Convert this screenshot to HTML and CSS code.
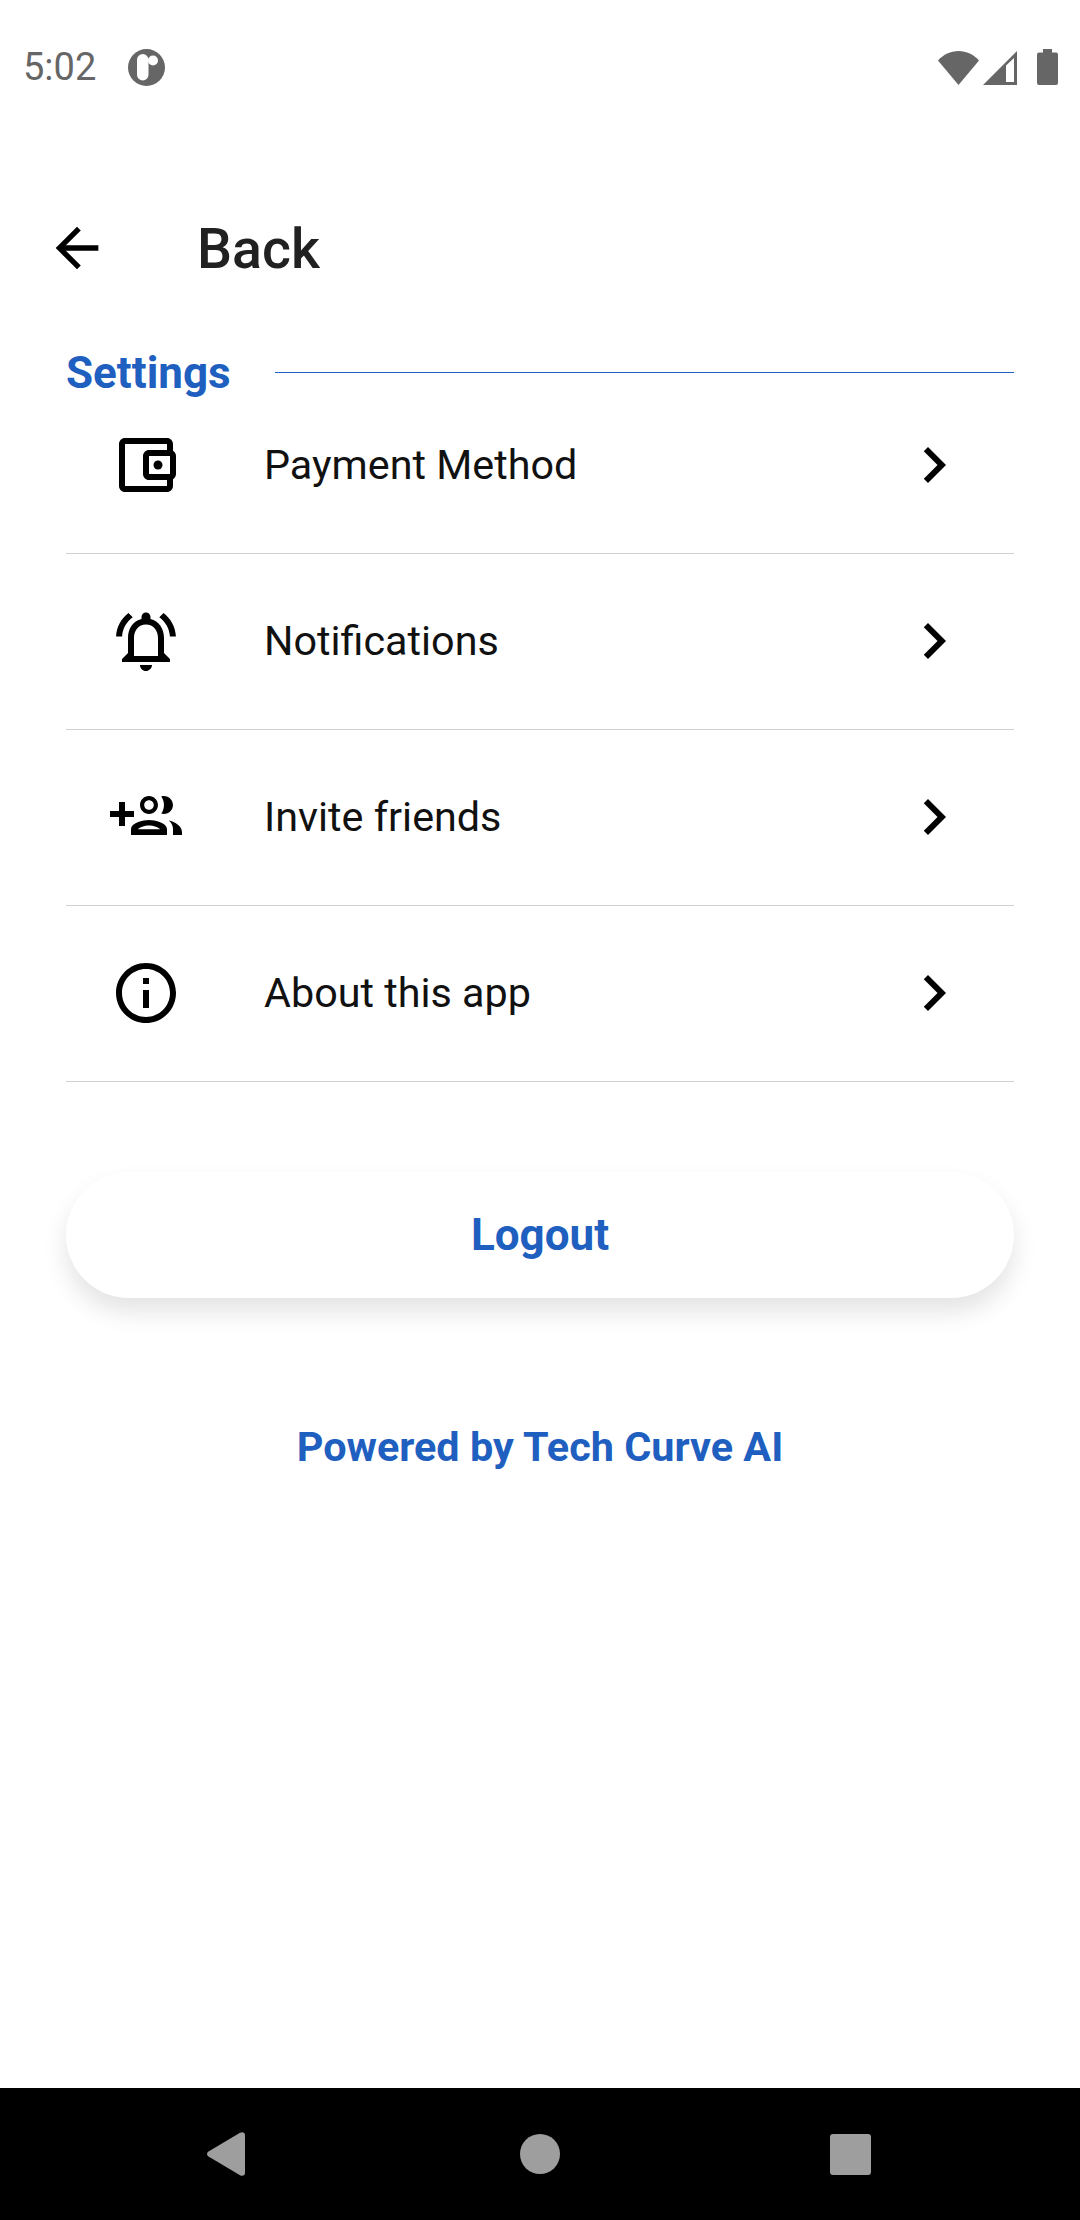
FILE: index.html
```html
<!DOCTYPE html>
<html lang="en">
<head>
  <meta charset="UTF-8">
  <meta name="viewport" content="width=device-width, initial-scale=1.0">
  <title>Settings</title>
  <link rel="stylesheet" href="styles.css">
</head>
<body>
  <div class="screen">
    <div class="status-bar">
      <span class="status-time">5:02</span>
      <svg class="status-logo" viewBox="0 0 37 37">
        <circle cx="18.5" cy="18.5" r="18.5" fill="#666"/>
        <rect x="9" y="5" width="11.5" height="26.5" rx="5.75" fill="#fff"/>
        <circle cx="25" cy="11.5" r="5" fill="#fff"/>
      </svg>
      <div class="status-icons">
        <svg class="wifi" viewBox="0 0 41 34"><path d="M0 9.5C5.500 3.500 12.500 0 20.500 0S35.500 3.500 41 9.500L20.500 34z" fill="#666"/></svg>
        <svg class="signal" viewBox="0 0 34 34">
          <path d="M34 0v34H0z" fill="#666"/>
          <path d="M23 14.500V31h8V7z" fill="#fff"/>
        </svg>
        <svg class="battery" viewBox="0 0 21 36"><path d="M6 0h9v3.500h4a2 2 0 0 1 2 2V34a2 2 0 0 1-2 2H2a2 2 0 0 1-2-2V5.500a2 2 0 0 1 2-2h4z" fill="#666"/></svg>
      </div>
    </div>

    <div class="top-bar">
      <svg class="back-arrow" viewBox="0 0 24 24"><path d="M20 11H7.830l5.590-5.590L12 4l-8 8 8 8 1.410-1.410L7.830 13H20v-2z"/></svg>
      <span class="back-label">Back</span>
    </div>

    <div class="content">
      <div class="section-title">
        <h2>Settings</h2>
        <div class="section-line"></div>
      </div>

      <div class="settings-list">
        <div class="settings-row">
          <svg class="row-icon" viewBox="0 0 24 24">
            <path d="M21 7.280V5c0-1.100-.9-2-2-2H5c-1.110 0-2 .9-2 2v14c0 1.100.89 2 2 2h14c1.100 0 2-.9 2-2v-2.280c.59-.35 1-.98 1-1.720V9c0-.74-.41-1.380-1-1.720zM20 9v6h-7V9h7zM5 19V5h14v2h-6c-1.100 0-2 .9-2 2v6c0 1.100.9 2 2 2h6v2H5z"/>
            <circle cx="16" cy="12" r="1.500"/>
          </svg>
          <span class="row-label">Payment Method</span>
          <svg class="row-icon" viewBox="0 0 24 24"><path d="M10 6L8.590 7.410 13.170 12l-4.580 4.590L10 18l6-6z"/></svg>
        </div>
        <div class="settings-row">
          <svg class="row-icon" viewBox="0 0 24 24"><path d="M7.580 4.080L6.150 2.650C3.750 4.480 2.170 7.300 2.030 10.500h2c.15-2.650 1.510-4.970 3.550-6.420zm12.390 6.420h2c-.15-3.200-1.730-6.020-4.120-7.850l-1.420 1.430c2.020 1.450 3.390 3.770 3.540 6.420zM18 11c0-3.070-1.640-5.640-4.500-6.320V4c0-.83-.67-1.500-1.500-1.500s-1.500.67-1.500 1.500v.68C7.630 5.360 6 7.920 6 11v5l-2 2v1h16v-1l-2-2v-5zm-2 6H8v-6c0-2.480 1.510-4.500 4-4.500s4 2.020 4 4.500v6zm-4 5c.14 0 .27-.01.4-.04.65-.14 1.180-.58 1.440-1.180.1-.24.15-.5.15-.78h-4c.01 1.100.9 2 2.010 2z"/></svg>
          <span class="row-label">Notifications</span>
          <svg class="row-icon" viewBox="0 0 24 24"><path d="M10 6L8.590 7.410 13.170 12l-4.580 4.590L10 18l6-6z"/></svg>
        </div>
        <div class="settings-row">
          <svg class="row-icon" viewBox="0 0 24 24">
            <path d="M8 10H5V7H3v3H0v2h3v3h2v-3h3v-2z"/>
            <path fill-rule="evenodd" d="M13 5c-1.660 0-3 1.340-3 3s1.340 3 3 3 2.990-1.340 2.990-3S14.660 5 13 5zm0 1.400c.88 0 1.600.72 1.600 1.600s-.72 1.600-1.600 1.600-1.600-.72-1.600-1.600.72-1.600 1.600-1.600z"/>
            <path d="M18 11c1.660 0 2.990-1.340 2.990-3S19.660 5 18 5c-.32 0-.63.05-.91.14.57.81.9 1.790.9 2.860s-.34 2.040-.9 2.860c.28.09.59.14.91.14z"/>
            <path d="M19.620 13.160c.83.73 1.380 1.660 1.380 2.840v2h3v-1c-.1-2-2.370-3.490-4.380-3.840z"/>
            <path fill-rule="evenodd" d="M13 13c-2 0-6 1-6 3v2h12v-2c0-2-4-3-6-3zm-3.800 3.100c.6-.7 2.300-1.300 3.800-1.300s3.200.6 3.800 1.300H9.200z"/>
          </svg>
          <span class="row-label">Invite friends</span>
          <svg class="row-icon" viewBox="0 0 24 24"><path d="M10 6L8.590 7.410 13.170 12l-4.580 4.590L10 18l6-6z"/></svg>
        </div>
        <div class="settings-row">
          <svg class="row-icon" viewBox="0 0 24 24"><path d="M11 7h2v2h-2zm0 4h2v6h-2zm1-9C6.480 2 2 6.480 2 12s4.480 10 10 10 10-4.480 10-10S17.520 2 12 2zm0 18c-4.410 0-8-3.590-8-8s3.590-8 8-8 8 3.590 8 8-3.590 8-8 8z"/></svg>
          <span class="row-label">About this app</span>
          <svg class="row-icon" viewBox="0 0 24 24"><path d="M10 6L8.590 7.410 13.170 12l-4.580 4.590L10 18l6-6z"/></svg>
        </div>
      </div>

      <button class="logout-btn" type="button">Logout</button>
      <p class="powered-by">Powered by Tech Curve AI</p>
    </div>

    <div class="nav-bar">
      <svg class="nav-back" viewBox="0 0 38 44"><path d="M1.500 19.500L33 .8C35.500-.6 38 .5 38 3v38c0 2.500-2.500 3.600-5 2.200L1.500 24.500c-2-1.300-2-3.700 0-5z" fill="#9e9e9e"/></svg>
      <div class="nav-home"></div>
      <div class="nav-recent"></div>
    </div>
  </div>
</body>
</html>
```

FILE: styles.css
```css
* {
  box-sizing: border-box;
}

body {
  margin: 0;
  font-family: Roboto, Arial, sans-serif;
  background-color: #fff;
}

.screen {
  display: flex;
  flex-direction: column;
  height: 2220px;
}

/* status bar */
.status-bar {
  display: flex;
  align-items: center;
  height: 134px;
  padding: 0 22px 0 23px;
  flex-shrink: 0;
}

.status-time {
  font-size: 38px;
  font-weight: 400;
  color: #666;
  width: 105px;
}

.status-logo {
  width: 37px;
  height: 37px;
}

.status-icons {
  display: flex;
  align-items: flex-end;
  margin-left: auto;
}

.wifi {
  width: 41px;
  height: 34px;
}

.signal {
  width: 34px;
  height: 34px;
  margin-left: 4px;
}

.battery {
  width: 21px;
  height: 36px;
  margin-left: 20px;
}

/* top bar */
.top-bar {
  display: flex;
  align-items: center;
  height: 228px;
  padding: 0 0 0 45px;
  flex-shrink: 0;
}

.back-arrow {
  width: 64px;
  height: 64px;
}

.back-label {
  padding-top: 2px;
  font-size: 55.5px;
  font-weight: 500;
  color: #212121;
  margin-left: 88px;
}

/* settings */
.content {
  flex: 1;
  padding: 0 66px;
}

.section-title {
  display: flex;
  align-items: center;
  height: 52px;
  margin-top: -16px;
}

.section-title h2 {
  margin: 0;
  padding-top: 2px;
  font-size: 44px;
  font-weight: 700;
  color: #1f5fbf;
}

.section-line {
  flex: 1;
  height: 1px;
  background-color: #1f5fbf;
  margin-left: 44px;
}

.settings-row {
  display: flex;
  align-items: center;
  padding: 51px 44px 52px;
  border-bottom: 1px solid #d0d0d0;
}

.settings-row:first-child {
  padding-top: 31px;
}

.row-icon {
  width: 72px;
  height: 72px;
  flex-shrink: 0;
}

.row-label {
  flex: 1;
  margin-left: 82px;
  font-size: 41.3px;
  color: #111;
}

.logout-btn {
  display: block;
  width: 100%;
  height: 126px;
  margin-top: 90px;
  padding-top: 1px;
  border: none;
  border-radius: 63px;
  background-color: #fff;
  box-shadow: 0 14px 24px rgba(0, 0, 0, 0.11);
  font-family: inherit;
  font-size: 44px;
  font-weight: 700;
  color: #1f5fbf;
}

.powered-by {
  margin: 125px 0 0;
  text-align: center;
  font-size: 41.4px;
  font-weight: 700;
  color: #1f5fbf;
}

/* android nav */
.nav-bar {
  display: flex;
  align-items: center;
  height: 132px;
  flex-shrink: 0;
  background-color: #000;
}

.nav-back {
  width: 38px;
  height: 44px;
  margin-left: 207px;
}

.nav-home {
  width: 40px;
  height: 40px;
  margin-left: 275px;
  border-radius: 50%;
  background-color: #9e9e9e;
}

.nav-recent {
  width: 41px;
  height: 41px;
  margin-left: 270px;
  border-radius: 3px;
  background-color: #9e9e9e;
}
```
